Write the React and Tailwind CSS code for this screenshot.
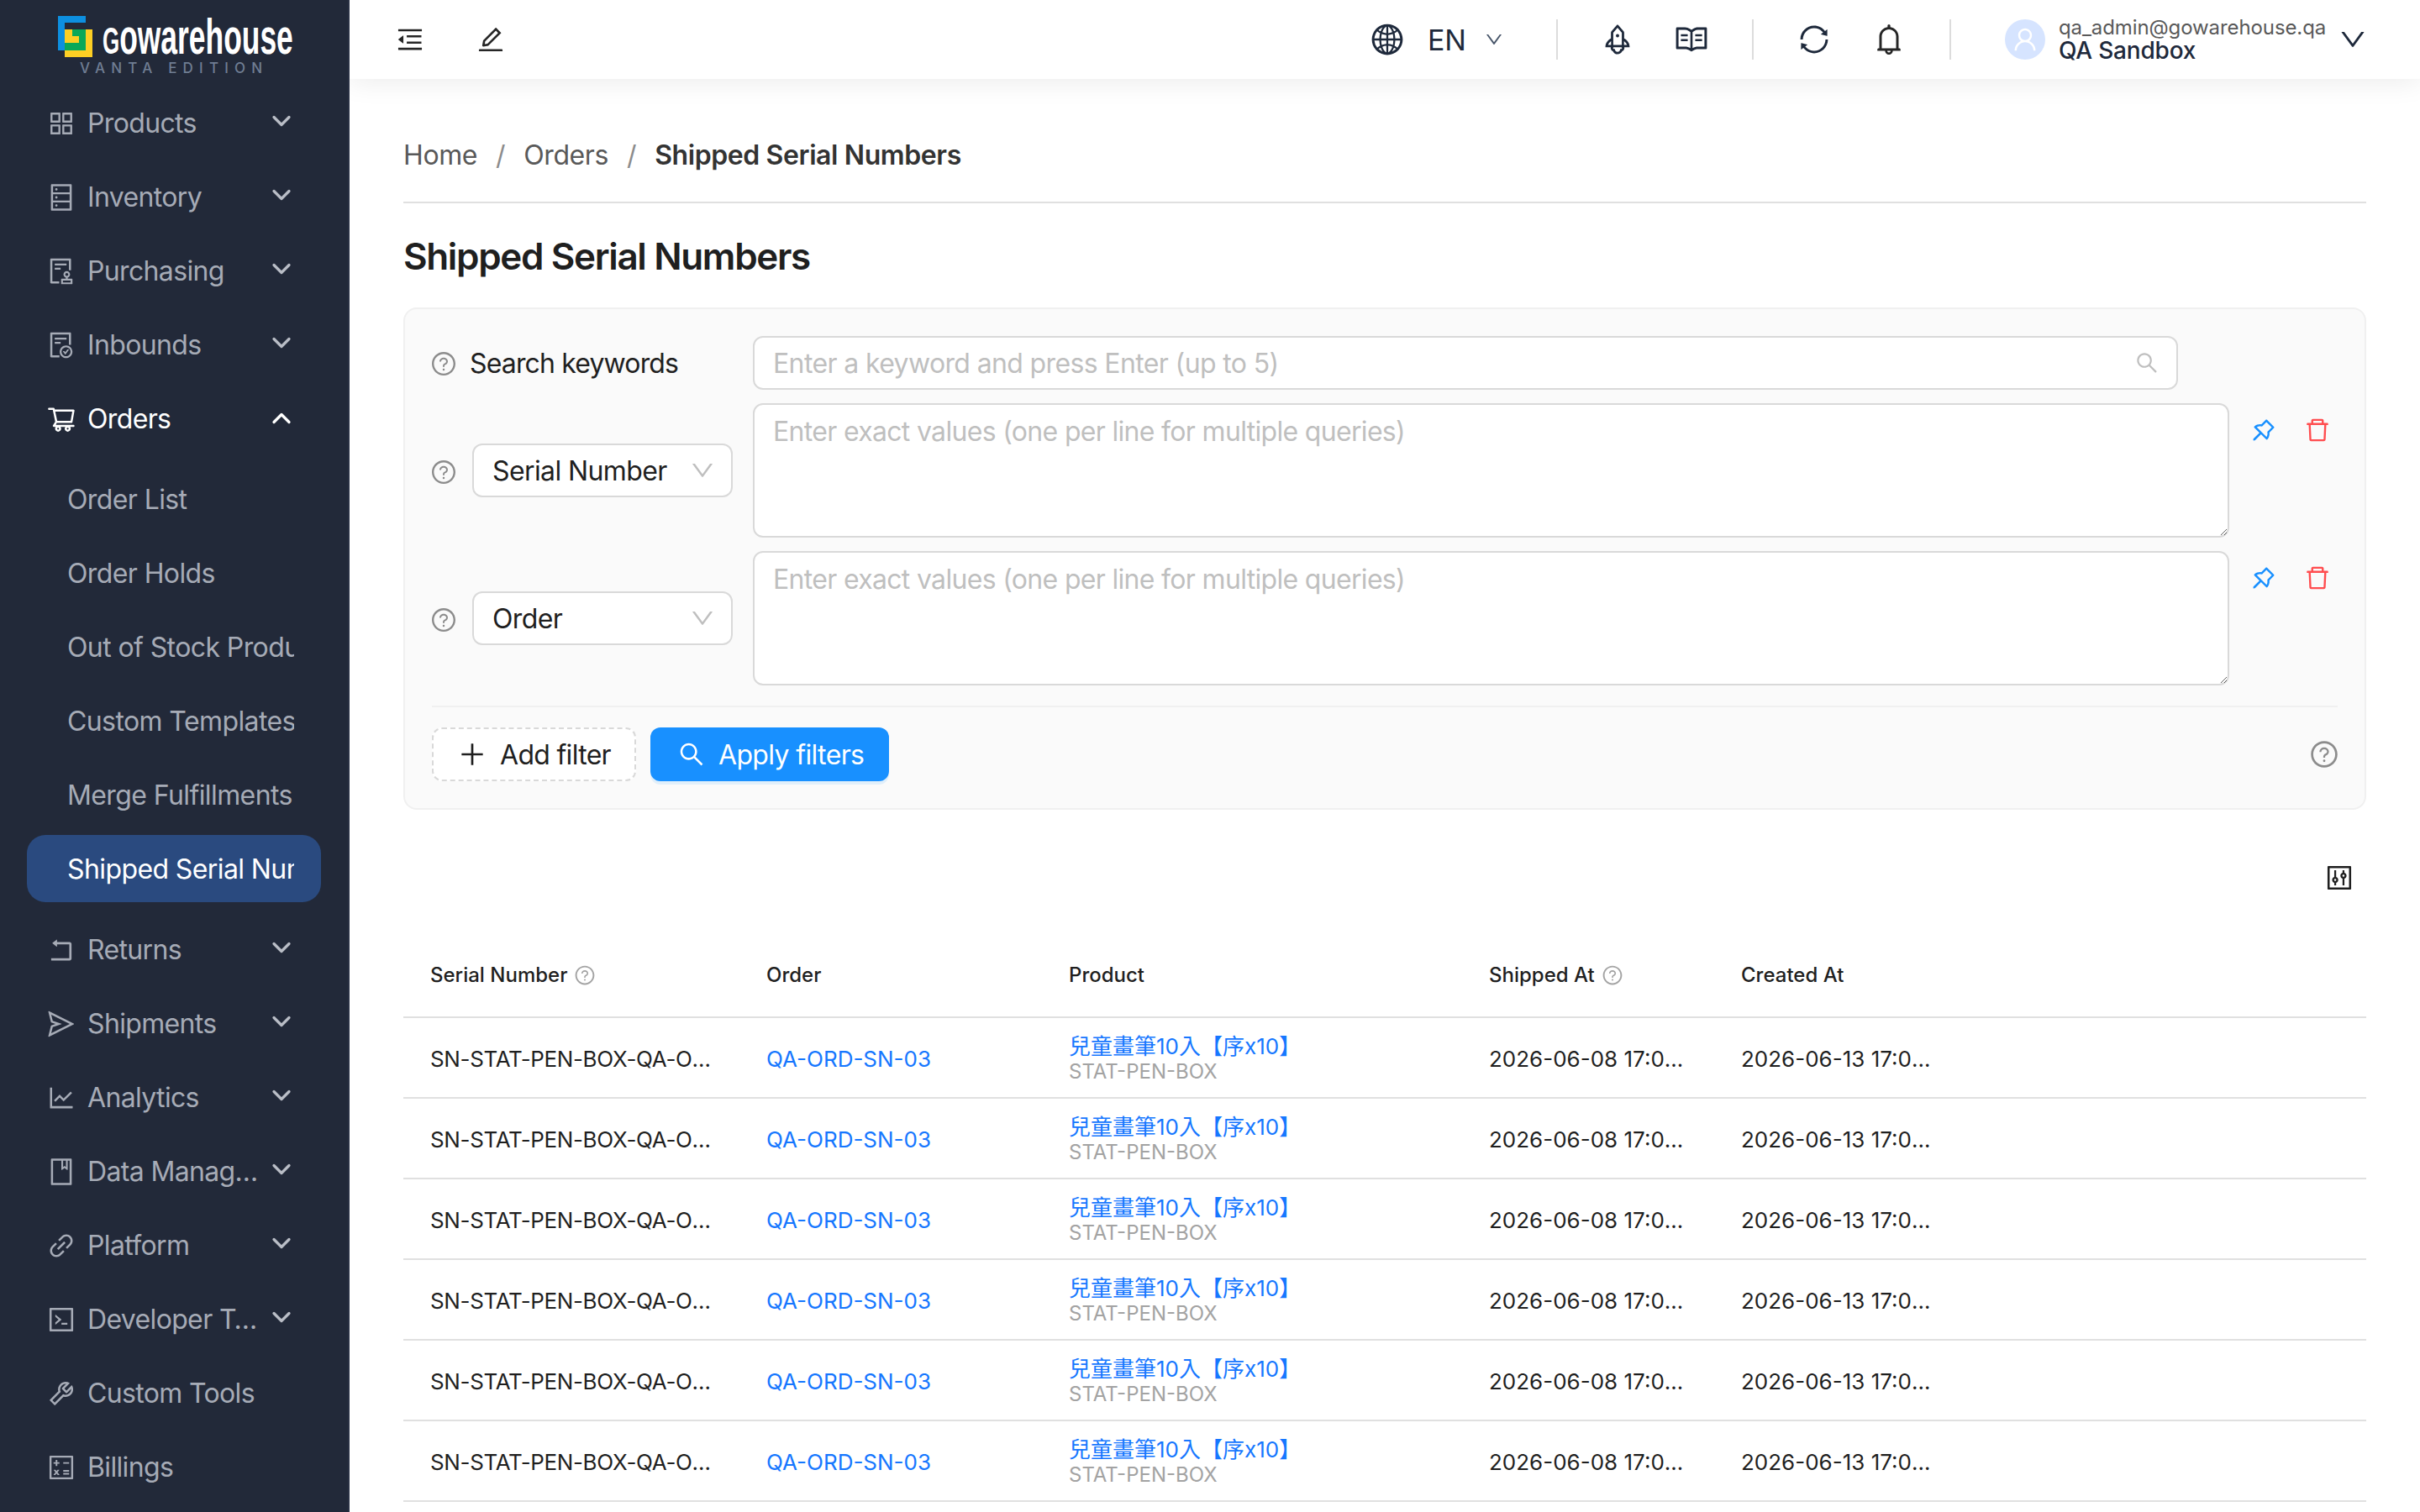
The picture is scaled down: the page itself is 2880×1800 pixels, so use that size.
import React from "react";
import { ChevronDown, ChevronUp } from "lucide-react";
import {
  AiOutlineAppstore, AiOutlineDatabase, AiOutlineAudit, AiOutlineFileDone, AiOutlineShoppingCart,
  AiOutlineRollback, AiOutlineSend, AiOutlineLineChart, AiOutlineBook, AiOutlineLink, AiOutlineCode,
  AiOutlineTool, AiOutlineCalculator, AiOutlineMenuFold, AiOutlineEdit, AiOutlineGlobal, AiOutlineDown,
  AiOutlineRocket, AiOutlineRead, AiOutlineSync, AiOutlineBell, AiOutlineUser, AiOutlineSearch,
  AiOutlinePlus, AiOutlinePushpin, AiOutlineDelete, AiOutlineQuestionCircle, AiOutlineControl,
} from "react-icons/ai";

function Logo() {
  return (
    <div className="h-[106px] pt-[19px] pl-[69px] shrink-0">
      <div className="flex h-[50px]">
        <svg width="41" height="50" viewBox="0 0 41 50" className="shrink-0">
          <path d="M0 0H33V8H8V41H0Z" fill="#0d8fe0" />
          <rect x="8" y="16" width="33" height="33" fill="#fdcf24" />
          <rect x="8" y="16" width="25" height="25" fill="#0aa858" />
          <path d="M8 16H17V24H25V32H8Z" fill="#fdcf24" />
        </svg>
        <div className="ml-[12px] w-[228px] h-[50px] leading-[50px] text-white font-bold text-[60px] [font-family:'Liberation_Sans',sans-serif] scale-x-[0.59] origin-left whitespace-nowrap">
          <span className="text-[44px]">G</span>owarehouse
        </div>
      </div>
      <div className="mt-[6px] ml-[26px] text-[17px] leading-[12px] font-medium tracking-[7.2px] text-[#6f7d93] whitespace-nowrap">
        VANTA EDITION
      </div>
    </div>
  );
}

function TopItem({ icon: Icon, label, open, hasChevron = true }) {
  return (
    <div className={`h-[80px] ml-[32px] w-[350px] pl-[23px] pt-[2px] flex items-center shrink-0 ${open ? "text-white" : "text-[#a6abb6]"}`}>
      <Icon className="text-[36px] shrink-0" />
      <span className={`ml-[13px] ${hasChevron ? "w-[206px]" : "w-[270px]"} truncate text-[32px] leading-[48px] tracking-[-0.65px]`}>{label}</span>
      {hasChevron && (
        open
          ? <ChevronUp size={36} strokeWidth={2.2} className="ml-[7px] mb-[2px] shrink-0 text-white" />
          : <ChevronDown size={36} strokeWidth={2.2} className="ml-[7px] mb-[6px] shrink-0 text-[#b9bdc6]" />
      )}
    </div>
  );
}

function SubItem({ label, active }) {
  return (
    <div className={`h-[80px] ml-[32px] w-[350px] pl-[48px] pr-[32px] pt-[2px] flex items-center rounded-[22px] shrink-0 ${active ? "bg-[#2a4a7f] text-white" : "text-[#a6abb6]"}`}>
      <span className="block w-full overflow-hidden whitespace-nowrap text-[32px] leading-[48px] tracking-[-0.6px]">{label}</span>
    </div>
  );
}

function Sidebar() {
  return (
    <aside className="w-[416px] h-full shrink-0 bg-[#222939] border-r-2 border-[#2a3144] overflow-hidden flex flex-col relative z-20">
      <Logo />
      <nav className="flex flex-col gap-2">
        <TopItem icon={AiOutlineAppstore} label="Products" />
        <TopItem icon={AiOutlineDatabase} label="Inventory" />
        <TopItem icon={AiOutlineAudit} label="Purchasing" />
        <TopItem icon={AiOutlineFileDone} label="Inbounds" />
        <TopItem icon={AiOutlineShoppingCart} label="Orders" open />
        <div className="flex flex-col gap-2 py-2">
          <SubItem label="Order List" />
          <SubItem label="Order Holds" />
          <SubItem label="Out of Stock Products" />
          <SubItem label="Custom Templates" />
          <SubItem label="Merge Fulfillments" />
          <SubItem label="Shipped Serial Numbers" active />
        </div>
        <TopItem icon={AiOutlineRollback} label="Returns" />
        <TopItem icon={AiOutlineSend} label="Shipments" />
        <TopItem icon={AiOutlineLineChart} label="Analytics" />
        <TopItem icon={AiOutlineBook} label="Data Management" />
        <TopItem icon={AiOutlineLink} label="Platform" />
        <TopItem icon={AiOutlineCode} label="Developer Tools" />
        <TopItem icon={AiOutlineTool} label="Custom Tools" hasChevron={false} />
        <TopItem icon={AiOutlineCalculator} label="Billings" hasChevron={false} />
      </nav>
    </aside>
  );
}

function Divider({ className }) {
  return <div className={`w-[2px] h-[48px] bg-[#dcdcdc] shrink-0 ${className}`} />;
}

function Header() {
  return (
    <header className="h-[94px] shrink-0 bg-white relative z-10 shadow-[0_4px_32px_rgba(0,0,0,0.08)] flex items-center text-[#1e293b]">
      <AiOutlineMenuFold className="ml-[54px] text-[36px] text-[#262626]" />
      <AiOutlineEdit className="ml-[60px] text-[36px] text-[#262626]" />
      <div className="flex-1" />
      <AiOutlineGlobal className="text-[42px]" />
      <span className="ml-[27px] pt-[2px] text-[34px] leading-[48px]">EN</span>
      <AiOutlineDown className="ml-[21px] text-[24px] text-[#475569]" />
      <Divider className="ml-[62px]" />
      <AiOutlineRocket className="ml-[50px] text-[42px]" />
      <AiOutlineRead className="ml-[46px] text-[42px]" />
      <Divider className="ml-[51px]" />
      <AiOutlineSync className="ml-[52px] text-[40px]" />
      <AiOutlineBell className="ml-[48px] text-[42px] text-[#262626]" />
      <Divider className="ml-[51px]" />
      <div className="ml-[64px] w-[48px] h-[48px] rounded-full bg-[#d6e4ff] flex items-center justify-center">
        <AiOutlineUser className="text-[34px] text-white" />
      </div>
      <div className="ml-[16px] w-[317px] whitespace-nowrap">
        <div className="text-[24px] leading-[26px] text-[#595959] tracking-[-0.1px]">qa_admin@gowarehouse.qa</div>
        <div className="text-[28px] leading-[28px] font-medium text-[#1e293b] tracking-[-0.2px]">QA Sandbox</div>
      </div>
      <AiOutlineDown className="ml-[15px] mr-[62px] text-[36px] text-[#1e293b]" />
    </header>
  );
}

function Help({ className = "" }) {
  return <AiOutlineQuestionCircle className={`text-[#8c8c8c] shrink-0 ${className}`} />;
}

function SelectBox({ label }) {
  return (
    <div className="ml-[18px] w-[310px] h-[64px] shrink-0 bg-white border-2 border-[#d9d9d9] rounded-[12px] pl-[22px] pr-[18px] flex items-center justify-between text-[32px] text-[#1f1f1f] tracking-[-0.6px]">
      <span className="pt-[2px]">{label}</span>
      <AiOutlineDown className="text-[32px] text-[#bfbfbf]" />
    </div>
  );
}

function FilterRow({ label }) {
  return (
    <div className="flex items-center">
      <Help className="text-[32px] -ml-[2px] mt-[3px]" />
      <SelectBox label={label} />
      <textarea
        placeholder="Enter exact values (one per line for multiple queries)"
        className="ml-[24px] w-[1757px] h-[160px] shrink-0 bg-white border-2 border-[#d9d9d9] rounded-[12px] px-[22px] pt-[8px] text-[32px] leading-[48px] tracking-[-0.68px] placeholder:text-[#bfbfbf] outline-none"
      />
      <div className="self-start pt-[15px] flex">
        <AiOutlinePushpin className="ml-[24px] text-[34px] text-[#1890ff]" />
        <AiOutlineDelete className="ml-[30px] text-[34px] text-[#ff4d4f]" />
      </div>
    </div>
  );
}

function FilterCard() {
  return (
    <section className="mt-[31px] border-2 border-[#f0f0f0] bg-[#fafafa] rounded-[16px] p-8 flex flex-col gap-4">
      <div className="flex items-center">
        <Help className="text-[32px] -ml-[2px] mt-[1px]" />
        <span className="ml-[15px] w-[337px] pt-[2px] text-[32px] leading-[48px] tracking-[-0.85px] text-[#1f1f1f] whitespace-nowrap">Search keywords</span>
        <div className="w-[1696px] h-[64px] bg-white border-2 border-[#d9d9d9] rounded-[12px] flex items-center pl-[22px] pr-[20px]">
          <input
            placeholder="Enter a keyword and press Enter (up to 5)"
            className="flex-1 pt-[2px] text-[32px] tracking-[-0.63px] bg-transparent placeholder:text-[#bfbfbf] outline-none"
          />
          <AiOutlineSearch className="text-[30px] text-[#bfbfbf]" />
        </div>
      </div>
      <FilterRow label="Serial Number" />
      <FilterRow label="Order" />
      <div className="mt-2 h-[2px] bg-[#f0f0f0]" />
      <div className="mt-2 flex items-center">
        <button className="h-[64px] w-[243px] border-2 border-dashed border-[#d9d9d9] bg-white rounded-[12px] flex items-center pl-[28px] text-[32px] text-[#1f1f1f] tracking-[-0.7px]">
          <AiOutlinePlus className="text-[36px]" />
          <span className="ml-[15px] pt-[2px]">Add filter</span>
        </button>
        <button className="ml-[17px] h-[64px] w-[284px] bg-[#1890ff] rounded-[12px] flex items-center pl-[32px] text-[32px] text-white tracking-[-0.65px] shadow-[0_4px_0_rgba(5,145,255,0.1)]">
          <AiOutlineSearch className="text-[34px]" />
          <span className="ml-[15px] pt-[2px]">Apply filters</span>
        </button>
        <div className="flex-1" />
        <Help className="text-[36px] -mr-[2px]" />
      </div>
    </section>
  );
}

const rows = [0, 1, 2, 3, 4, 5, 6];

function DataTable() {
  const th = "h-[99px] px-8 pb-[2px] text-left font-medium text-[24px] text-[#1f1f1f] border-b-2 border-[#e0e0e0] align-middle";
  const td = "h-[96px] px-8 pt-[3px] border-b-2 border-[#e0e0e0] text-[26px] text-[#1f1f1f] align-middle";
  return (
    <table className="w-full table-fixed border-separate border-spacing-0">
      <thead>
        <tr>
          <th className={`${th} w-[400px]`}>
            <span className="flex items-center gap-[8px]">Serial Number <AiOutlineQuestionCircle className="text-[26px] text-[#a3a3a3]" /></span>
          </th>
          <th className={`${th} w-[360px]`}>Order</th>
          <th className={`${th} w-[500px]`}>Product</th>
          <th className={`${th} w-[300px]`}>
            <span className="flex items-center gap-[8px]">Shipped At <AiOutlineQuestionCircle className="text-[26px] text-[#a3a3a3]" /></span>
          </th>
          <th className={`${th} w-[300px]`}>Created At</th>
          <th className={th}></th>
        </tr>
      </thead>
      <tbody>
        {rows.map((r) => (
          <tr key={r}>
            <td className={td}><div className="truncate tracking-[-0.35px]">SN-STAT-PEN-BOX-QA-ORD-SN-03-00{r + 1}</div></td>
            <td className={td}><div className="truncate text-[#1677ff]">QA-ORD-SN-03</div></td>
            <td className={td}>
              <div className="text-[26px] leading-[30px] text-[#1677ff] whitespace-nowrap">兒童畫筆10入【序x10】</div>
              <div className="text-[24px] leading-[30px] text-[#a3a3a3]">STAT-PEN-BOX</div>
            </td>
            <td className={td}><div className="truncate">2026-06-08 17:00:00 UTC</div></td>
            <td className={td}><div className="truncate">2026-06-13 17:00:00 UTC</div></td>
            <td className={td}></td>
          </tr>
        ))}
      </tbody>
    </table>
  );
}

export default function App() {
  return (
    <div className="w-[2880px] h-[1800px] flex overflow-hidden bg-white [font-family:Inter,'Noto_Sans_CJK_TC',sans-serif]">
      <Sidebar />
      <main className="flex-1 min-w-0 h-full flex flex-col overflow-hidden">
        <Header />
        <div className="flex-1 min-h-0 overflow-hidden px-[64px]">
          <div className="pt-[67px] pb-[31px] border-b-2 border-[#e0e0e0] flex items-center text-[32px] leading-[48px] tracking-[-0.4px] text-[#595959]">
            <span>Home</span>
            <span className="mx-[22px] text-[#8c8c8c]">/</span>
            <span>Orders</span>
            <span className="mx-[22px] text-[#8c8c8c]">/</span>
            <span className="font-semibold text-[#333333]">Shipped Serial Numbers</span>
          </div>
          <h1 className="mt-[33px] text-[44px] leading-[60px] font-semibold tracking-[-1.35px] text-[#1f1f1f]">Shipped Serial Numbers</h1>
          <FilterCard />
          <div className="mt-[63px] mb-[50px] h-[36px] flex justify-end pr-[14px]">
            <AiOutlineControl className="text-[36px] text-[#1f1f1f]" />
          </div>
          <DataTable />
        </div>
      </main>
    </div>
  );
}
